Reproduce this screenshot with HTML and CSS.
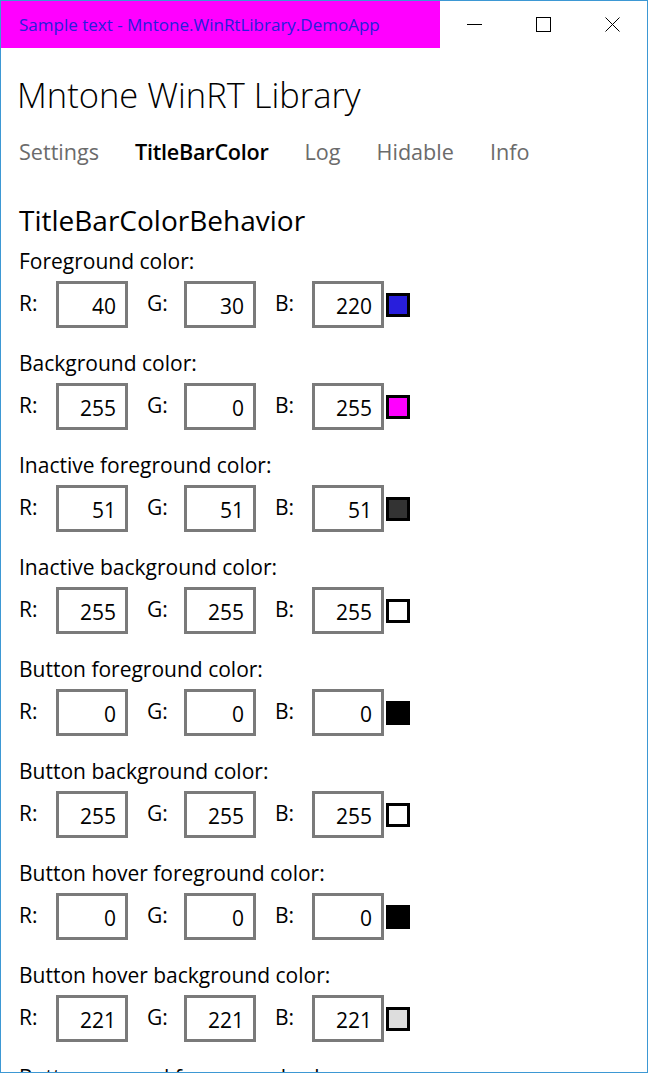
FILE: index.html
```html
<!DOCTYPE html>
<html lang="en">
<head>
<meta charset="utf-8">
<title>Mntone WinRT Library</title>
<link rel="stylesheet" href="styles.css">
</head>
<body>
<div class="window">
  <div class="titlebar">
    <div class="caption">Sample text - Mntone.WinRtLibrary.DemoApp</div>
    <div class="caption-buttons">
      <div class="cbtn"><svg width="15" height="15" viewBox="0 0 15 15"><path d="M0 7.5H15" stroke="#000" stroke-width="1"/></svg></div>
      <div class="cbtn"><svg width="15" height="15" viewBox="0 0 15 15"><rect x="0.5" y="0.5" width="14" height="14" fill="none" stroke="#000" stroke-width="1"/></svg></div>
      <div class="cbtn"><svg width="15" height="15" viewBox="0 0 15 15"><path d="M0.5 0.5L14.5 14.5M14.5 0.5L0.5 14.5" stroke="#000" stroke-width="1"/></svg></div>
    </div>
  </div>
  <div class="content">
    <h1 class="app-title">Mntone WinRT Library</h1>
    <nav class="pivot">
      <span class="pivot-item">Settings</span>
      <span class="pivot-item selected">TitleBarColor</span>
      <span class="pivot-item">Log</span>
      <span class="pivot-item">Hidable</span>
      <span class="pivot-item">Info</span>
    </nav>
    <h2 class="section">TitleBarColorBehavior</h2>

    <div class="group">
      <div class="glabel">Foreground color:</div>
      <div class="row">
        <span class="clabel">R:</span><span class="box">40</span>
        <span class="clabel">G:</span><span class="box">30</span>
        <span class="clabel">B:</span><span class="box last">220</span>
        <span class="swatch" style="background:#281edc"></span>
      </div>
    </div>
    <div class="group">
      <div class="glabel">Background color:</div>
      <div class="row">
        <span class="clabel">R:</span><span class="box">255</span>
        <span class="clabel">G:</span><span class="box">0</span>
        <span class="clabel">B:</span><span class="box last">255</span>
        <span class="swatch" style="background:#ff00ff"></span>
      </div>
    </div>
    <div class="group">
      <div class="glabel">Inactive foreground color:</div>
      <div class="row">
        <span class="clabel">R:</span><span class="box">51</span>
        <span class="clabel">G:</span><span class="box">51</span>
        <span class="clabel">B:</span><span class="box last">51</span>
        <span class="swatch" style="background:#333333"></span>
      </div>
    </div>
    <div class="group">
      <div class="glabel">Inactive background color:</div>
      <div class="row">
        <span class="clabel">R:</span><span class="box">255</span>
        <span class="clabel">G:</span><span class="box">255</span>
        <span class="clabel">B:</span><span class="box last">255</span>
        <span class="swatch" style="background:#ffffff"></span>
      </div>
    </div>
    <div class="group">
      <div class="glabel">Button foreground color:</div>
      <div class="row">
        <span class="clabel">R:</span><span class="box">0</span>
        <span class="clabel">G:</span><span class="box">0</span>
        <span class="clabel">B:</span><span class="box last">0</span>
        <span class="swatch" style="background:#000000"></span>
      </div>
    </div>
    <div class="group">
      <div class="glabel">Button background color:</div>
      <div class="row">
        <span class="clabel">R:</span><span class="box">255</span>
        <span class="clabel">G:</span><span class="box">255</span>
        <span class="clabel">B:</span><span class="box last">255</span>
        <span class="swatch" style="background:#ffffff"></span>
      </div>
    </div>
    <div class="group">
      <div class="glabel">Button hover foreground color:</div>
      <div class="row">
        <span class="clabel">R:</span><span class="box">0</span>
        <span class="clabel">G:</span><span class="box">0</span>
        <span class="clabel">B:</span><span class="box last">0</span>
        <span class="swatch" style="background:#000000"></span>
      </div>
    </div>
    <div class="group">
      <div class="glabel">Button hover background color:</div>
      <div class="row">
        <span class="clabel">R:</span><span class="box">221</span>
        <span class="clabel">G:</span><span class="box">221</span>
        <span class="clabel">B:</span><span class="box last">221</span>
        <span class="swatch" style="background:#dddddd"></span>
      </div>
    </div>
    <div class="group">
      <div class="glabel">Button pressed foreground color:</div>
      <div class="row">
        <span class="clabel">R:</span><span class="box">0</span>
        <span class="clabel">G:</span><span class="box">0</span>
        <span class="clabel">B:</span><span class="box last">0</span>
        <span class="swatch" style="background:#000000"></span>
      </div>
    </div>
  </div>
</div>
</body>
</html>
```
FILE: styles.css
```css
html, body {
  margin: 0;
  padding: 0;
  background: #ffffff;
}
body {
  font-family: "Open Sans", "Noto Sans", sans-serif;
  color: #000;
}
.window {
  box-sizing: border-box;
  width: 648px;
  height: 1073px;
  border: 1px solid #3d98d4;
  overflow: hidden;
  background: #fff;
}
.titlebar {
  display: flex;
  height: 47px;
}
.caption {
  width: 439px;
  background: #ff00ff;
  color: #281edc;
  font-size: 17px;
  line-height: 47px;
  padding-left: 18px;
  box-sizing: border-box;
  white-space: nowrap;
}
.caption-buttons {
  display: flex;
  flex: 1;
}
.cbtn {
  width: 69px;
  display: flex;
  align-items: center;
  justify-content: center;
  padding-bottom: 1px;
}
.content {
  padding-left: 18px;
}
.app-title {
  margin: 23px 0 0 -2px;
  font-weight: 300;
  font-size: 34.5px;
  line-height: 48px;
}
.pivot {
  display: flex;
  gap: 36px;
  margin-top: 18px;
  font-size: 21.6px;
  line-height: 30px;
}
.pivot-item {
  color: #6b6b6b;
}
.pivot-item.selected {
  color: #000;
  font-weight: 600;
  letter-spacing: -0.25px;
}
.section {
  margin: 35px 0 9px 0;
  font-weight: 400;
  font-size: 28px;
  line-height: 36px;
}
.group {
  margin-bottom: 21px;
}
.glabel {
  font-size: 21px;
  line-height: 28px;
}
.row {
  display: flex;
  align-items: center;
  margin-top: 6px;
  height: 47px;
}
.clabel {
  width: 37px;
  font-size: 21px;
  padding-bottom: 4px;
}
.box {
  box-sizing: border-box;
  width: 72px;
  height: 47px;
  border: 3px solid #7a7a7a;
  margin-right: 19px;
  text-align: right;
  padding-right: 9px;
  font-size: 21px;
  line-height: 44px;
}
.box.last {
  margin-right: 2px;
}
.swatch {
  box-sizing: border-box;
  width: 24px;
  height: 24px;
  border: 3px solid #000;
  margin-top: 1px;
}
```
